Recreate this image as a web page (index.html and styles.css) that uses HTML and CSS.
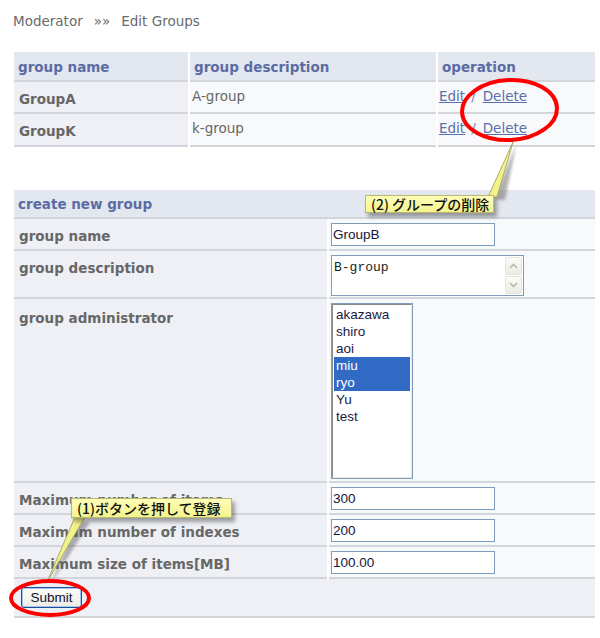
FILE: index.html
```html
<!DOCTYPE html>
<html lang="ja">
<head>
<meta charset="utf-8">
<title>Edit Groups</title>
<link rel="stylesheet" href="styles.css">
</head>
<body>
<div class="page">
  <div class="crumb"><span>Moderator</span><span class="sep">»»</span><span>Edit Groups</span></div>

  <div class="list">
    <div class="hd">group name</div>
    <div class="hd">group description</div>
    <div class="hd">operation</div>

    <div class="name">GroupA</div>
    <div class="desc">A-group</div>
    <div class="ops"><a href="#">Edit</a><span class="slash">/</span><a href="#">Delete</a></div>

    <div class="name">GroupK</div>
    <div class="desc">k-group</div>
    <div class="ops"><a href="#">Edit</a><span class="slash">/</span><a href="#">Delete</a></div>
  </div>

  <div class="form">
    <div class="hd span">create new group</div>

    <div class="label">group name</div>
    <div class="value"><input class="field" type="text" value="GroupB"></div>

    <div class="label">group description</div>
    <div class="value">
      <div class="textarea">
        <div class="ta-text">B-group</div>
        <div class="ta-scroll">
          <span class="sb-btn"><svg width="9" height="6" viewBox="0 0 9 6"><path d="M1 5 L4.5 1.5 L8 5" fill="none" stroke="#b9b9b0" stroke-width="1.6"/></svg></span>
          <span class="sb-btn"><svg width="9" height="6" viewBox="0 0 9 6"><path d="M1 1 L4.5 4.5 L8 1" fill="none" stroke="#b9b9b0" stroke-width="1.6"/></svg></span>
        </div>
      </div>
    </div>

    <div class="label admin">group administrator</div>
    <div class="value">
      <div class="listbox">
        <div class="lb-inner">
          <div class="opt">akazawa</div>
          <div class="opt">shiro</div>
          <div class="opt">aoi</div>
          <div class="opt sel">miu</div>
          <div class="opt sel">ryo</div>
          <div class="opt">Yu</div>
          <div class="opt">test</div>
        </div>
      </div>
    </div>

    <div class="label">Maximum number of items</div>
    <div class="value"><input class="field" type="text" value="300"></div>

    <div class="label">Maximum number of indexes</div>
    <div class="value"><input class="field" type="text" value="200"></div>

    <div class="label">Maximum size of items[MB]</div>
    <div class="value"><input class="field" type="text" value="100.00"></div>

    <div class="submit-row span"><button class="submit" type="button">Submit</button></div>
  </div>
</div>

<svg class="marks" width="600" height="638" viewBox="0 0 600 638">
  <defs>
    <filter id="blur" x="-50%" y="-50%" width="200%" height="200%"><feGaussianBlur stdDeviation="1.5"/></filter>
  </defs>
  <polygon points="516,145 493,200 505,200" fill="#555" opacity="0.45" filter="url(#blur)"/>
  <polygon points="50,585 78,522 90,522" fill="#555" opacity="0.45" filter="url(#blur)"/>
  <polygon points="513,142 488,197 497,197" fill="#f2f28a" stroke="#9a9a5a" stroke-width="0.8"/>
  <polygon points="47,582 75,517 85,517" fill="#f2f28a" stroke="#9a9a5a" stroke-width="0.8"/>
  <ellipse cx="509.5" cy="110" rx="47.5" ry="30" fill="none" stroke="#ff0000" stroke-width="4" transform="rotate(-3 509.5 110)"/>
  <ellipse cx="50" cy="598" rx="39" ry="17" fill="none" stroke="#ff0000" stroke-width="4"/>
</svg>

<div class="callout c2">(2) グループの削除</div>
<div class="callout c1">(1)ボタンを押して登録</div>
</body>
</html>
```

FILE: styles.css
```css
html, body {
  margin: 0;
  padding: 0;
  background: #ffffff;
}

body {
  position: relative;
  width: 600px;
  height: 638px;
  overflow: hidden;
  font-family: "DejaVu Sans", Verdana, sans-serif;
  font-size: 13.5px;
  line-height: 16px;
  color: #676767;
}

.page {
  padding: 13px 0 0 14px;
}

.crumb {
  margin-left: -1px;
  color: #6a6a6a;
  height: 16px;
}

.crumb .sep {
  margin: 0 11px;
}

/* ---------- group list ---------- */
.list {
  margin-top: 23px;
  width: 581px;
  display: grid;
  grid-template-columns: 174px 246px 157px;
  grid-template-rows: 30px 32px 33px;
  column-gap: 2px;
}

.list > div,
.form > div {
  box-sizing: border-box;
  border-bottom: 2px solid #d3d5db;
}

.hd {
  background: #e3e7ef;
  color: #5b6ca5;
  font-weight: bold;
  padding: 7px 4px 0;
}

.name {
  background: #eef0f5;
  font-weight: bold;
  padding: 9px 5px 0;
}

.desc {
  background: #f8f9fb;
  padding: 6px 2px 0;
}

.ops {
  background: #f8f9fb;
  padding: 6px 1px 0;
  color: #7a86ad;
}

.ops a {
  color: #5d6fa9;
  text-decoration: underline;
}

.ops .slash {
  margin: 0 7px 0 6px;
}

/* ---------- create form ---------- */
.form {
  margin-top: 43px;
  width: 581px;
  display: grid;
  grid-template-columns: 313px 266px;
  grid-template-rows: 29px 32px 48px 184px 32px 32px 32px 39px;
  column-gap: 2px;
}

.form .hd {
  padding: 6px 4px 0;
}

.span {
  grid-column: 1 / -1;
}

.label {
  background: #eef0f5;
  font-weight: bold;
  padding: 9px 5px 0;
}

.label.admin {
  padding-top: 11px;
}

.value {
  background: #f8f9fb;
  padding: 4px 2px 0;
}

.field {
  display: block;
  box-sizing: border-box;
  width: 164px;
  height: 23px;
  margin: 0;
  border: 1px solid #7f9db9;
  padding: 0 1px;
  background: #ffffff;
  font-family: "Liberation Sans", Arial, sans-serif;
  font-size: 13.5px;
  color: #15153a;
  outline: none;
}

.textarea {
  box-sizing: border-box;
  width: 193px;
  height: 41px;
  border: 1px solid #7f9db9;
  background: #ffffff;
  display: flex;
}

.ta-text {
  flex: 1;
  padding: 4px 2px 0;
  font-family: "Liberation Mono", "Courier New", monospace;
  font-size: 13px;
  line-height: 16px;
  color: #222222;
}

.ta-scroll {
  width: 17px;
  display: flex;
  flex-direction: column;
  gap: 1px;
  padding: 1px 1px 1px 0;
}

.sb-btn {
  flex: 1;
  display: flex;
  align-items: center;
  justify-content: center;
  border: 1px solid #e4e3dc;
  border-radius: 2px;
  background: linear-gradient(#fbfbf8, #ecebe4);
}

.listbox {
  box-sizing: border-box;
  width: 82px;
  height: 176px;
  border: 1px solid #7f9db9;
  background: #ffffff;
}

.lb-inner {
  box-sizing: border-box;
  height: 100%;
  border: 1px solid;
  border-color: #8a8a8a #ece9d8 #ece9d8 #8a8a8a;
  padding: 1px 1px;
}

.opt {
  height: 17px;
  line-height: 17px;
  padding-left: 2px;
  font-family: "Liberation Sans", Arial, sans-serif;
  font-size: 13.5px;
  color: #1a1a40;
}

.opt.sel {
  background: #316ac5;
  color: #ffffff;
}

.submit-row {
  background: #eef0f5;
  padding: 8px 7px 0;
}

.submit {
  display: block;
  box-sizing: border-box;
  width: 61px;
  height: 21px;
  margin: 0;
  padding: 0;
  border: 1px solid #1e4f9a;
  border-radius: 3px;
  box-shadow: inset 0 0 0 1px #a9c4ec;
  background: linear-gradient(#fdfdfb, #eeece2);
  font-family: "Liberation Sans", Arial, sans-serif;
  font-size: 13.5px;
  color: #101030;
  line-height: 17px;
}

/* ---------- annotations ---------- */
.marks {
  position: absolute;
  left: 0;
  top: 0;
  pointer-events: none;
}

.callout {
  position: absolute;
  box-sizing: border-box;
  background: linear-gradient(#ffffb8, #f3f38e);
  border: 1px solid #b8b870;
  box-shadow: 3px 4px 4px rgba(0, 0, 0, 0.35);
  font-family: "Noto Sans CJK JP", "Liberation Sans", sans-serif;
  font-weight: 500;
  font-size: 14px;
  color: #111111;
  white-space: nowrap;
}

.c2 {
  left: 365px;
  top: 195px;
  width: 129px;
  height: 18px;
  line-height: 16px;
  padding-left: 5px;
}

.c1 {
  left: 71px;
  top: 498px;
  width: 161px;
  height: 20px;
  line-height: 18px;
  padding-left: 5px;
}
```
